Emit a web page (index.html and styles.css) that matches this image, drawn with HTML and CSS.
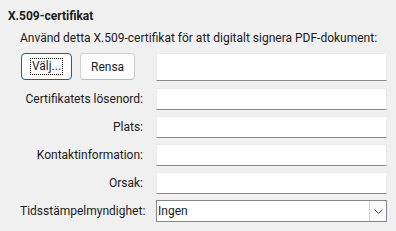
FILE: index.html
```html
<!DOCTYPE html>
<html lang="sv">
<head>
    <meta charset="UTF-8">
    <title>X.509-certifikat</title>
    <link rel="stylesheet" href="styles.css">
</head>
<body>
    <div class="group">
        <h1 class="group-title">X.509-certifikat</h1>
        <p class="group-intro">Använd detta X.509-certifikat för att digitalt signera PDF-dokument:</p>
        <div class="form-grid">
            <div class="btn-row">
                <button class="btn btn-default"><span class="focus-ring">Välj...</span></button>
                <button class="btn">Rensa</button>
            </div>
            <input class="field field-tall" type="text">

            <label class="form-label">Certifikatets lösenord:</label>
            <input class="field" type="password">

            <label class="form-label">Plats:</label>
            <input class="field" type="text">

            <label class="form-label">Kontaktinformation:</label>
            <input class="field" type="text">

            <label class="form-label">Orsak:</label>
            <input class="field" type="text">

            <label class="form-label">Tidsstämpelmyndighet:</label>
            <div class="combo">
                <span class="combo-value">Ingen</span>
                <span class="combo-btn">
                    <svg width="9" height="5" viewBox="0 0 9 5"><path d="M0.5 0.5 L4.5 4.5 L8.5 0.5" fill="none" stroke="#444" stroke-width="1"/></svg>
                </span>
            </div>
        </div>
    </div>
</body>
</html>
```

FILE: styles.css
```css
body {
    margin: 0;
    background-color: #f0f0f0;
    font-family: Roboto, sans-serif;
    font-size: 12px;
    color: #1b1b1b;
}

.group {
    padding: 8px 9px 0 8px;
}

.group-title {
    margin: 0;
    font-size: 12px;
    font-weight: bold;
    line-height: 16px;
}

.group-intro {
    margin: 6px 0 0 12px;
    line-height: 16px;
    white-space: nowrap;
}

.form-grid {
    display: grid;
    grid-template-columns: 136px 231px;
    row-gap: 6px;
    margin: 7px 0 0 12px;
    align-items: center;
}

.btn-row {
    display: flex;
    gap: 8px;
    padding-left: 1px;
    align-self: start;
}

.btn {
    height: 27px;
    padding: 0 10px;
    font-family: inherit;
    font-size: 12px;
    color: #1b1b1b;
    background-color: #fdfdfd;
    border: 1px solid #d0d0d0;
    border-bottom-color: #bcbcbc;
    border-radius: 4px;
}

.btn-default {
    width: 51px;
    padding: 0;
    border-color: #0067c0;
}

.focus-ring {
    display: inline-block;
    padding: 0 1px;
    line-height: 15px;
    border: 1px dotted #000;
}

.form-label {
    text-align: right;
    padding-right: 13px;
    line-height: 16px;
    white-space: nowrap;
}

.field {
    box-sizing: border-box;
    height: 22px;
    margin: 0;
    background-color: #fff;
    border: 1px solid #ececec;
    border-bottom: 1px solid #8a8a8a;
    font-family: inherit;
    font-size: 12px;
}

.field-tall {
    height: 28px;
    margin-bottom: 1px;
}

.combo {
    box-sizing: border-box;
    height: 22px;
    display: flex;
    align-items: center;
    background-color: #fff;
    border: 1px solid #85858c;
}

.combo-value {
    flex: 1;
    padding-left: 1px;
}

.combo-btn {
    box-sizing: border-box;
    width: 17px;
    height: 20px;
    display: flex;
    align-items: center;
    justify-content: center;
    background-color: #fafafa;
    border-left: 1px solid #d4d4d4;
}
```
